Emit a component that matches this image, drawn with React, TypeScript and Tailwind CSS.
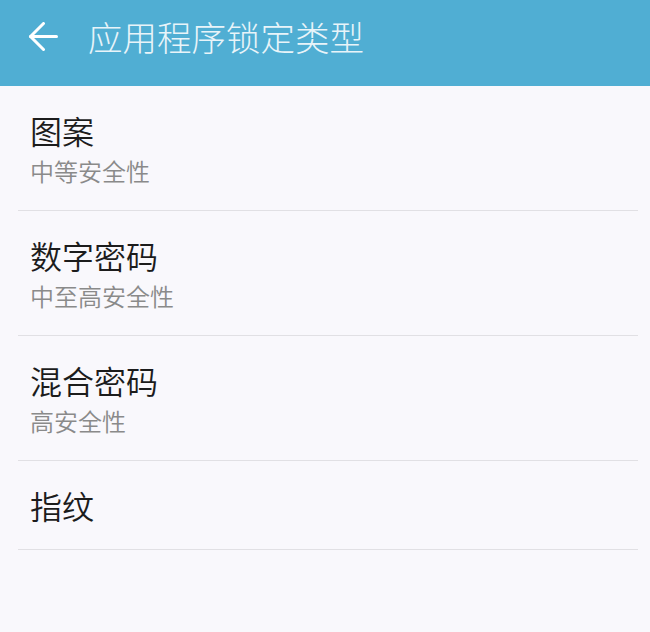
import React from "react";

const items = [
  { title: "图案", sub: "中等安全性" },
  { title: "数字密码", sub: "中至高安全性" },
  { title: "混合密码", sub: "高安全性" },
  { title: "指纹" },
];

export default function App() {
  return (
    <div
      className="w-[650px] h-[632px] bg-[#f9f8fc] overflow-hidden"
      style={{ fontFamily: '"Noto Sans CJK SC", "Noto Sans", sans-serif' }}
    >
      <header className="h-[86px] bg-[#50aed3]">
        <div className="h-[72px] flex items-center">
          <svg
            width="30"
            height="30"
            viewBox="0 0 30 30"
            className="ml-[28px] mt-[1px]"
            fill="none"
            stroke="#ffffff"
            strokeWidth="3"
            strokeLinecap="round"
            strokeLinejoin="round"
          >
            <path d="M2.5 14.5H28.5" />
            <path d="M15.5 1.5L2.5 14.5L15.5 27.5" />
          </svg>
          <h1 className="ml-[30px] text-[34.5px] leading-[40px] text-[#e8f4f9] font-light">
            应用程序锁定类型
          </h1>
        </div>
      </header>
      <ul>
        {items.map((it) => (
          <li key={it.title} className="ml-[18px] mr-[12px] border-b border-[#e1e0e4]">
            <div
              className={
                "pl-[12px] flex flex-col justify-center " +
                (it.sub ? "h-[124px]" : "h-[88px]")
              }
            >
              <div className="text-[32px] leading-[40px] text-[#1c1c1c] font-[350]">{it.title}</div>
              {it.sub && (
                <div className="mt-[6px] text-[24px] leading-[30px] text-[#8a8a8a] font-[350]">{it.sub}</div>
              )}
            </div>
          </li>
        ))}
      </ul>
    </div>
  );
}
